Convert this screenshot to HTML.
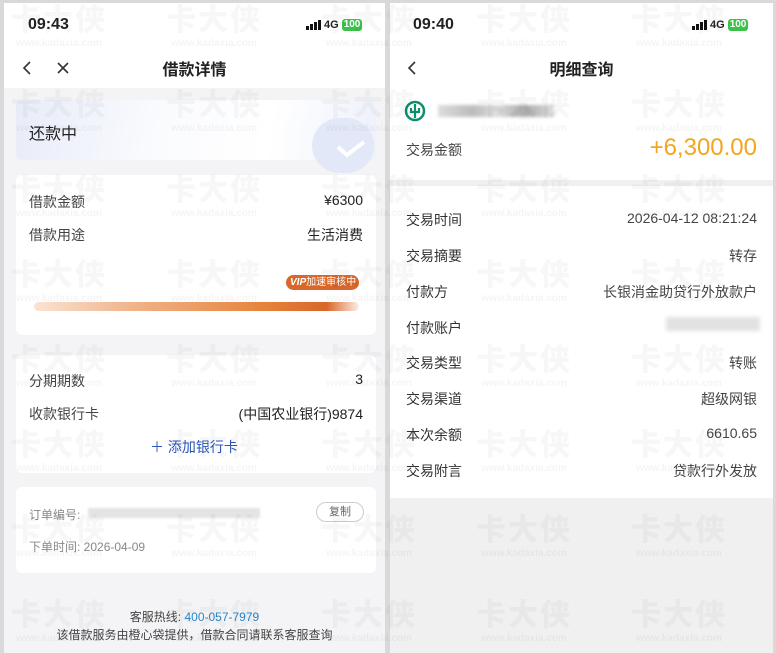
<!DOCTYPE html>
<html><head><meta charset="utf-8">
<style>
*{margin:0;padding:0;box-sizing:border-box}
body{width:776px;height:653px;overflow:hidden;background:#d9d9d9;font-family:"Liberation Sans","Noto Sans CJK SC",sans-serif;position:relative;color:#222}
.p{position:absolute;top:3px;height:650px;overflow:hidden}
#L{left:4px;width:381px;background:#f4f4f6}
#R{left:390px;width:383px;background:#f0f0f0}
.abs{position:absolute}
.time{font-weight:bold;font-size:16px;top:13px}
.sb{top:16px;font-size:11px;font-weight:bold;display:flex;align-items:center;gap:3px}
.bars{display:flex;align-items:flex-end;gap:1px}
.bars i{display:block;width:3px;background:#111}
.bat{background:#3bc24a;color:#fff;border-radius:3px;font-size:10px;padding:0 2px;line-height:12px}
.card{position:absolute;left:12px;width:360px;background:#fff;border-radius:6px}
.row{position:absolute;font-size:14px}
.wm{position:absolute;left:0;top:0;width:776px;height:653px;pointer-events:none}
.wm div{position:absolute;text-align:center;width:110px}
.wm b{display:block;font-size:30px;font-weight:900;color:rgba(0,0,0,0.03);letter-spacing:2px;line-height:34px}
.wm s{display:block;text-decoration:none;font-size:10px;font-weight:bold;color:rgba(0,0,0,0.045)}
</style></head><body>
<div id="L" class="p">
 <div class="abs" style="left:0;top:0;width:381px;height:85px;background:#fff"></div>
 <div class="abs time" style="left:24px">09:43</div>
 <div class="abs sb" style="left:302px"><span class="bars"><i style="height:4px"></i><i style="height:6px"></i><i style="height:8px"></i><i style="height:10px"></i></span>4G<span class="bat">100</span></div>
 <svg class="abs" style="left:18px;top:57px" width="50" height="16"><path d="M8 2 L2 8 L8 14" stroke="#333" stroke-width="1.6" fill="none"/><path d="M36 3 L46 13 M46 3 L36 13" stroke="#333" stroke-width="1.6"/></svg>
 <div class="abs" style="left:0;width:381px;top:53px;text-align:center;font-size:16px;font-weight:bold">借款详情</div>
 <div class="card" style="top:97px;height:60px;background:linear-gradient(100deg,#e8ecf8,#fafbfe 40%,#fff 70%,#eef1fb)"></div>
 <div class="abs" style="left:308px;top:115px;width:62px;height:55px;border-radius:30px;background:#e3e8f8"></div>
 <svg class="abs" style="left:330px;top:136px" width="34" height="20"><path d="M4 8 L13 16 L30 3" stroke="#fff" stroke-width="4" fill="none"/></svg>
 <div class="row" style="left:25px;top:117px;font-size:16px">还款中</div>
 <div class="card" style="top:172px;height:160px"></div>
 <div class="row" style="left:25px;top:189px;color:#444">借款金额</div>
 <div class="row" style="right:22px;top:189px">¥6300</div>
 <div class="row" style="left:25px;top:222px;color:#444">借款用途</div>
 <div class="row" style="right:22px;top:222px">生活消费</div>
 <div class="abs" style="left:282px;top:272px;width:73px;height:15px;border-radius:8px;background:#d9662a;color:#fff;font-size:10px;line-height:15px;padding-left:4px"><i style="font-weight:900">VIP</i>加速审核中</div>
 <div class="abs" style="left:30px;top:299px;width:325px;height:9px;border-radius:5px;background:linear-gradient(90deg,#fbe3d3,#f0b48b 30%,#e6843e 70%,#d9662a 90%,#fbeee5)"></div>
 <div class="card" style="top:352px;height:118px"></div>
 <div class="row" style="left:25px;top:368px;color:#444">分期期数</div>
 <div class="row" style="right:22px;top:368px">3</div>
 <div class="row" style="left:25px;top:401px;color:#444">收款银行卡</div>
 <div class="row" style="right:22px;top:401px">(中国农业银行)9874</div>
 <div class="row" style="left:146px;top:434px;color:#2c55b8">＋ 添加银行卡</div>
 <div class="card" style="top:484px;height:86px"></div>
 <div class="row" style="left:25px;top:503px;font-size:12px;color:#888">订单编号:</div>
 <div class="abs" style="left:84px;top:505px;width:172px;height:10px;background:#e4e4e6;filter:blur(1px)"></div>
 <div class="abs" style="left:312px;top:499px;width:48px;height:20px;border:1px solid #ccc;border-radius:10px;font-size:11px;color:#666;text-align:center;line-height:18px">复制</div>
 <div class="row" style="left:25px;top:535px;font-size:12px;color:#888">下单时间: 2026-04-09</div>
 <div class="row" style="left:0;width:381px;text-align:center;top:605px;font-size:12px;color:#444">客服热线: <span style="color:#2a86c8">400-057-7979</span></div>
 <div class="row" style="left:0;width:381px;text-align:center;top:623px;font-size:12px;color:#444">该借款服务由橙心袋提供，借款合同请联系客服查询</div>
</div>
<div id="R" class="p">
 <div class="abs" style="left:0;top:0;width:383px;height:177px;background:#fff"></div>
 <div class="abs" style="left:0;top:183px;width:383px;height:312px;background:#fff"></div>
 <div class="abs time" style="left:23px">09:40</div>
 <div class="abs sb" style="left:302px"><span class="bars"><i style="height:4px"></i><i style="height:6px"></i><i style="height:8px"></i><i style="height:10px"></i></span>4G<span class="bat">100</span></div>
 <svg class="abs" style="left:16px;top:57px" width="14" height="16"><path d="M9 2 L3 8 L9 14" stroke="#333" stroke-width="1.6" fill="none"/></svg>
 <div class="abs" style="left:0;width:383px;top:53px;text-align:center;font-size:16px;font-weight:bold">明细查询</div>
 <svg class="abs" style="left:14px;top:97px" width="22" height="22"><circle cx="11" cy="11" r="9" fill="none" stroke="#0e8e6c" stroke-width="2.5"/><path d="M11 4 V18 M7 8 V12 H15 V8" stroke="#0e8e6c" stroke-width="2.2" fill="none"/></svg>
 <div class="abs" style="left:48px;top:102px;width:116px;height:12px;background:linear-gradient(90deg,#ddd,#bbb 30%,#ddd 50%,#aaa 75%,#ddd);filter:blur(1.5px)"></div>
 <div class="row" style="left:16px;top:137px;color:#444">交易金额</div>
 <div class="row" style="right:16px;top:131px;font-size:24px;color:#f2a51f">+6,300.00</div>
 <div class="row" style="left:16px;top:207px;color:#333">交易时间</div>
 <div class="row" style="right:16px;top:207px;color:#444">2026-04-12 08:21:24</div>
 <div class="row" style="left:16px;top:243px;color:#333">交易摘要</div>
 <div class="row" style="right:16px;top:243px;color:#444">转存</div>
 <div class="row" style="left:16px;top:279px;color:#333">付款方</div>
 <div class="row" style="right:16px;top:279px;color:#444">长银消金助贷行外放款户</div>
 <div class="row" style="left:16px;top:315px;color:#333">付款账户</div>
 <div class="abs" style="left:276px;top:314px;width:94px;height:14px;background:#e2e2e2;filter:blur(2px)"></div>
 <div class="row" style="left:16px;top:350px;color:#333">交易类型</div>
 <div class="row" style="right:16px;top:350px;color:#444">转账</div>
 <div class="row" style="left:16px;top:386px;color:#333">交易渠道</div>
 <div class="row" style="right:16px;top:386px;color:#444">超级网银</div>
 <div class="row" style="left:16px;top:422px;color:#333">本次余额</div>
 <div class="row" style="right:16px;top:422px;color:#444">6610.65</div>
 <div class="row" style="left:16px;top:458px;color:#333">交易附言</div>
 <div class="row" style="right:16px;top:458px;color:#444">贷款行外发放</div>
</div>
<div class="wm" id="wm"></div>
<script>
var w=document.getElementById('wm'),h='';
for(var r=0;r<8;r++)for(var c=0;c<5;c++){h+='<div style="left:'+(4+c*155)+'px;top:'+(4+r*85)+'px"><b>卡大侠</b><s>www.kadaxia.com</s></div>';}
w.innerHTML=h;
</script>
</body></html>
